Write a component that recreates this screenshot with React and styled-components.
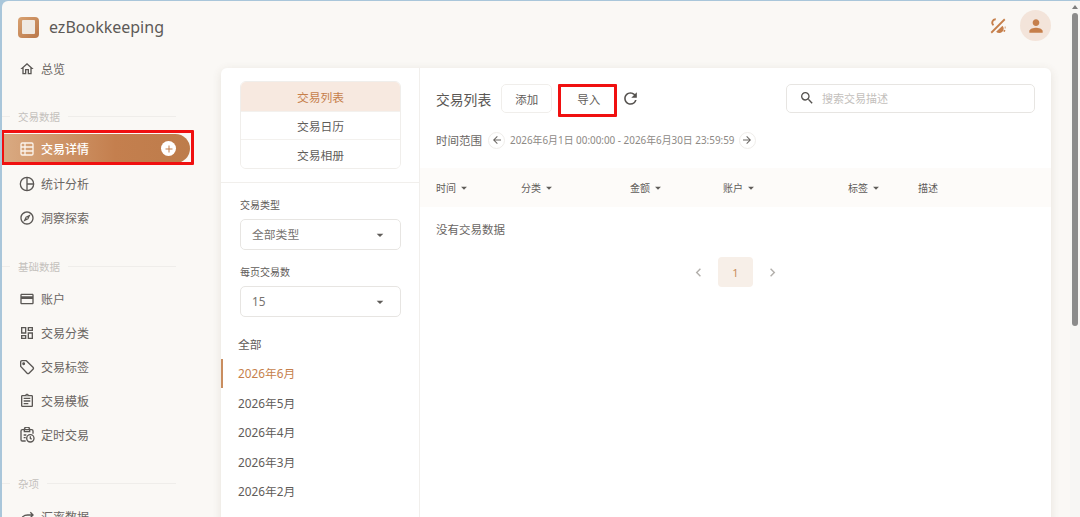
import React from 'react';
import styled, { createGlobalStyle } from 'styled-components';
import {
  MdOutlineHome, MdOutlineExplore, MdOutlineCreditCard, MdOutlineDashboard,
  MdOutlineAssignment, MdRefresh, MdSearch, MdPerson, MdAdd, MdArrowBack, MdArrowForward,
  MdArrowDropDown, MdChevronLeft, MdChevronRight,
} from 'react-icons/md';

const GlobalStyle = createGlobalStyle`
  html, body { margin: 0; padding: 0; height: 100%; overflow: hidden; background: #a9c6da; }
  * { box-sizing: border-box; }
  body { font-family: "Noto Sans", "Noto Sans CJK SC", sans-serif; }
`;

const Frame = styled.div`
  display: flex;
  height: 517px;
  width: 1080px;
  overflow: hidden;
  padding: 1px 0 0 2px;
`;
const Page = styled.div`
  flex: 1;
  display: flex;
  background: #faf8f5;
  border-top-left-radius: 6px;
  overflow: hidden;
  position: relative;
`;
const Sidebar = styled.aside`
  width: 219px;
  flex: none;
  display: flex;
  flex-direction: column;
`;
const Brand = styled.div`
  display: flex;
  flex: none;
  align-items: center;
  gap: 10px;
  height: 26px;
  margin: 13px 0 0 16px;
  font-size: 16px;
  color: #5d5a57;
`;
const Logo = styled.div`
  width: 21px;
  height: 21px;
  border-radius: 4px;
  background: linear-gradient(135deg, #d9a271, #b9774a);
  display: flex;
  align-items: center;
  justify-content: center;
`;
const LogoPage = styled.div`
  width: 13px;
  height: 14px;
  border-radius: 1px;
  background: #efe9e2;
`;
const NavItem = styled.div`
  display: flex;
  flex: none;
  align-items: center;
  height: 34px;
  padding-left: 17px;
  gap: 6px;
  font-size: 12px;
  color: #6a6663;
  svg { flex: none; width: 16px; height: 16px; color: #5a5754; }
`;
const ActiveItem = styled(NavItem)`
  width: 187px;
  height: 29px;
  margin: 0 0 4px 1px;
  padding: 0 14px 0 16px;
  border-radius: 0 15px 15px 0;
  background: linear-gradient(90deg, #d9aa82, #c47f4e 60%, #bd7c4b);
  color: #fff;
  font-weight: 500;
  svg { color: #fbf3ec; }
`;
const PlusBadge = styled.span`
  margin-left: auto;
  width: 15px;
  height: 15px;
  border-radius: 50%;
  background: #fff;
  display: flex;
  align-items: center;
  justify-content: center;
  svg { width: 12px; height: 12px; color: #c17c4b; }
`;
const SectionLabel = styled.div`
  display: flex;
  flex: none;
  align-items: center;
  height: 16px;
  width: 174px;
  font-size: 10.5px;
  color: #c4c1bd;
  gap: 8px;
  margin-top: ${p => p.$top}px;
  margin-bottom: ${p => p.$bottom}px;
  &::before { content: ""; width: 8px; height: 1px; background: #efedea; }
  &::after { content: ""; flex: 1; height: 1px; background: #efedea; }
`;
const HomeItem = styled(NavItem)`
  margin-top: 12px;
`;
const Main = styled.main`
  width: 830px;
  flex: none;
  padding-top: 67px;
`;
const Card = styled.section`
  display: flex;
  height: 520px;
  background: #fff;
  border-radius: 6px;
  box-shadow: 0 2px 10px rgba(90, 70, 50, 0.12);
`;
const Filters = styled.div`
  width: 199px;
  flex: none;
  border-right: 1px solid #f1efec;
  display: flex;
  flex-direction: column;
`;
const Tabs = styled.div`
  flex: none;
  margin: 13px 18px 0 19px;
  border: 1px solid #f0eeeb;
  border-radius: 6px;
  overflow: hidden;
`;
const Tab = styled.div`
  height: 28.7px;
  display: flex;
  align-items: center;
  justify-content: center;
  font-size: 11.8px;
  color: ${p => (p.$active ? '#c67f4b' : '#5f5c59')};
  background: ${p => (p.$active ? '#f7e9e0' : '#fff')};
  border-top: ${p => (p.$active ? 'none' : '1px solid #f3f1ee')};
`;
const FilterBlock = styled.div`
  flex: none;
  border-top: 1px solid #f1efec;
  margin-top: 13px;
  padding: 15px 18px 0 19px;
`;
const FieldLabel = styled.div`
  font-size: 10px;
  height: 15px;
  line-height: 15px;
  color: #5f5c59;
  margin-bottom: 6px;
`;
const Select = styled.div`
  height: 31px;
  border: 1px solid #e7e5e2;
  border-radius: 5px;
  display: flex;
  align-items: center;
  justify-content: space-between;
  padding: 0 12px 2px 11px;
  font-size: 11.8px;
  color: #77736f;
  margin-bottom: 15px;
  &:last-child { margin-bottom: 0; }
  svg { color: #5f5c59; margin-top: 2px; }
`;
const MonthList = styled.div`
  flex: none;
  margin-top: 12px;
`;
const Month = styled.div`
  height: 29.5px;
  display: flex;
  align-items: center;
  padding: 0 0 1px ${p => (p.$active ? '15px' : '17px')};
  font-size: 11.8px;
  color: ${p => (p.$active ? '#c67f4b' : '#5f5c59')};
  border-left: ${p => (p.$active ? '2px solid #c98d5f' : 'none')};
`;
const Content = styled.div`
  flex: 1;
  display: flex;
  flex-direction: column;
  min-width: 0;
`;
const TopRow = styled.div`
  display: flex;
  flex: none;
  align-items: center;
  height: 29px;
  margin: 16px 16px 0 16px;
`;
const Title = styled.div`
  font-size: 13.8px;
  color: #5a5754;
  margin-right: 10px;
`;
const Button = styled.div`
  width: ${p => p.$w}px;
  height: 29px;
  border: 1px solid ${p => (p.$plain ? 'transparent' : '#f0eeeb')};
  border-radius: 5px;
  display: flex;
  align-items: center;
  justify-content: center;
  font-size: 11.5px;
  color: #5f5c59;
  margin-right: ${p => p.$gap}px;
`;
const RefreshIcon = styled(MdRefresh)`
  color: #55524f;
`;
const Search = styled.div`
  margin-left: auto;
  width: 249px;
  height: 29px;
  border: 1px solid #e7e5e2;
  border-radius: 5px;
  display: flex;
  align-items: center;
  padding: 0 0 1px 12px;
  gap: 7px;
  font-size: 11px;
  color: #c3c0bc;
  svg { color: #55524f; }
`;
const RangeRow = styled.div`
  display: flex;
  flex: none;
  align-items: center;
  height: 20px;
  margin: 17px 0 0 16px;
  font-size: 11.5px;
  color: #6a6663;
`;
const RangeText = styled.span`
  font-size: 9.9px;
  color: #8d8985;
  margin: 0 4px 0 5px;
  white-space: nowrap;
`;
const RoundArrow = styled.span`
  width: 17px;
  height: 17px;
  border-radius: 50%;
  border: 1px solid #efedea;
  display: flex;
  align-items: center;
  justify-content: center;
  color: #6a6663;
  margin-left: ${p => p.$left || 0}px;
`;
const TableHead = styled.div`
  display: grid;
  flex: none;
  grid-template-columns: 85px 109px 93px 125px 70px 1fr;
  align-items: center;
  height: 39px;
  margin-top: 18px;
  padding-left: 16px;
  background: #fdfbf9;
  font-size: 10px;
  color: #5f5c59;
`;
const HeadCell = styled.div`
  display: flex;
  align-items: center;
  gap: 1px;
`;
const EmptyRow = styled.div`
  flex: none;
  height: 44px;
  display: flex;
  align-items: center;
  padding-left: 16px;
  font-size: 11.5px;
  color: #6a6663;
`;
const Pager = styled.div`
  display: flex;
  flex: none;
  align-items: center;
  justify-content: center;
  margin-top: 6px;
  gap: 11px;
  color: #b3b0ac;
`;
const PageNumber = styled.div`
  width: 35px;
  height: 30px;
  border-radius: 4px;
  background: #f7efe8;
  color: #c98b5d;
  font-size: 11px;
  display: flex;
  align-items: center;
  justify-content: center;
`;
const Gutter = styled.div`
  flex: 1;
`;
const HeaderTools = styled.div`
  position: absolute;
  top: 9px;
  right: 29px;
  display: flex;
  align-items: center;
  gap: 13px;
`;
const Avatar = styled.div`
  width: 31px;
  height: 31px;
  border-radius: 50%;
  background: #f3e4da;
  color: #c67f4b;
  display: flex;
  align-items: center;
  justify-content: center;
`;
const Scrollbar = styled.div`
  width: 10px;
  flex: none;
  background: #f7f6f4;
  display: flex;
  flex-direction: column;
  align-items: center;
  padding-top: 4px;
`;
const ScrollArrow = styled.div`
  width: 0;
  height: 0;
  border-left: 3px solid transparent;
  border-right: 3px solid transparent;
  border-bottom: 4px solid #7d7d7d;
`;
const ScrollThumb = styled.div`
  width: 6px;
  height: 313px;
  margin-top: 4px;
  border-radius: 3px;
  background: #8b8b8b;
`;
const Highlight = styled.div`
  position: absolute;
  left: ${p => p.$x}px;
  top: ${p => p.$y}px;
  width: ${p => p.$w}px;
  height: ${p => p.$h}px;
  border: 3px solid #f01010;
  border-radius: 1px;
  pointer-events: none;
`;

const TableIcon = () => (
  <svg viewBox="0 0 24 24" fill="none" stroke="currentColor" strokeWidth="2">
    <rect x="3" y="3" width="18" height="18" rx="2" />
    <path d="M3 9h18M3 15h18M9 3v18" />
  </svg>
);
const PieIcon = () => (
  <svg viewBox="0 0 24 24" fill="none" stroke="currentColor" strokeWidth="2">
    <circle cx="12" cy="12" r="10" />
    <path d="M12 2v20M12 12h10" />
  </svg>
);
const TagIcon = () => (
  <svg viewBox="0 0 24 24" fill="none" stroke="currentColor" strokeWidth="2" strokeLinejoin="round">
    <path d="M2.500 4.500a2 2 0 0 1 2-2H11l10 10a2 2 0 0 1 0 2.800l-6 6a2 2 0 0 1-2.800 0L2.500 11z" />
    <circle cx="7" cy="7" r="1.200" fill="currentColor" />
  </svg>
);
const ClipClockIcon = () => (
  <svg viewBox="0 0 24 24" fill="none" stroke="currentColor" strokeWidth="2">
    <path d="M10 21H5a2 2 0 0 1-2-2V6a2 2 0 0 1 2-2h3a4 4 0 0 1 8 0h3a2 2 0 0 1 2 2v4" />
    <path d="M8 4h8v3H8zM7 12h4M7 16h3" />
    <circle cx="17" cy="17" r="5.500" />
    <path d="M17 14v3l2 1.500" />
  </svg>
);
const SwapIcon = () => (
  <svg viewBox="0 0 24 24" fill="none" stroke="currentColor" strokeWidth="2">
    <path d="M3 19c0-6 4-10 10-10h8M17 5l4 4-4 4" />
  </svg>
);
const ThemeIcon = () => (
  <svg width="18" height="18" viewBox="0 0 24 24" fill="none" stroke="#c67f4b" strokeWidth="2.400">
    <path d="M21 3 3 21" />
    <path d="M9 3a4.500 4.500 0 0 0-3 8" />
    <path d="M9.500 19.500a5.800 5.800 0 0 0 8.500-8z" fill="#c67f4b" stroke="none" />
    <path d="M11 8.500v.1M19.500 18l2 1M14 21.500v.1M21 14h1" />
  </svg>
);
const Caret = () => <MdArrowDropDown size={14} />;

const months = ['2026年5月', '2026年4月', '2026年3月', '2026年2月'];
const columns = [
  { name: '时间', sort: true }, { name: '分类', sort: true }, { name: '金额', sort: true },
  { name: '账户', sort: true }, { name: '标签', sort: true }, { name: '描述' },
];

export default function App() {
  return (
    <Frame>
      <GlobalStyle />
      <Page>
        <Sidebar>
          <Brand><Logo><LogoPage /></Logo>ezBookkeeping</Brand>
          <HomeItem><MdOutlineHome />总览</HomeItem>
          <SectionLabel $top={22} $bottom={10}>交易数据</SectionLabel>
          <ActiveItem>
            <TableIcon />交易详情
            <PlusBadge><MdAdd /></PlusBadge>
          </ActiveItem>
          <NavItem><PieIcon />统计分析</NavItem>
          <NavItem><MdOutlineExplore />洞察探索</NavItem>
          <SectionLabel $top={23} $bottom={8}>基础数据</SectionLabel>
          <NavItem><MdOutlineCreditCard />账户</NavItem>
          <NavItem><MdOutlineDashboard />交易分类</NavItem>
          <NavItem><TagIcon />交易标签</NavItem>
          <NavItem><MdOutlineAssignment />交易模板</NavItem>
          <NavItem><ClipClockIcon />定时交易</NavItem>
          <SectionLabel $top={23} $bottom={9}>杂项</SectionLabel>
          <NavItem><SwapIcon />汇率数据</NavItem>
        </Sidebar>
        <Main>
          <Card>
            <Filters>
              <Tabs>
                <Tab $active>交易列表</Tab>
                <Tab>交易日历</Tab>
                <Tab>交易相册</Tab>
              </Tabs>
              <FilterBlock>
                <FieldLabel>交易类型</FieldLabel>
                <Select>全部类型<MdArrowDropDown size={16} /></Select>
                <FieldLabel>每页交易数</FieldLabel>
                <Select>15<MdArrowDropDown size={16} /></Select>
              </FilterBlock>
              <MonthList>
                <Month>全部</Month>
                <Month $active>2026年6月</Month>
                {months.map(m => <Month key={m}>{m}</Month>)}
              </MonthList>
            </Filters>
            <Content>
              <TopRow>
                <Title>交易列表</Title>
                <Button $w={51} $gap={8}>添加</Button>
                <Button $w={57} $gap={4} $plain>导入</Button>
                <RefreshIcon size={19} />
                <Search><MdSearch size={16} />搜索交易描述</Search>
              </TopRow>
              <RangeRow>
                时间范围
                <RoundArrow $left={6}><MdArrowBack size={12} /></RoundArrow>
                <RangeText>2026年6月1日 00:00:00 - 2026年6月30日 23:59:59</RangeText>
                <RoundArrow><MdArrowForward size={12} /></RoundArrow>
              </RangeRow>
              <TableHead>
                {columns.map(c => (
                  <HeadCell key={c.name}>{c.name}{c.sort && <Caret />}</HeadCell>
                ))}
              </TableHead>
              <EmptyRow>没有交易数据</EmptyRow>
              <Pager>
                <MdChevronLeft size={17} />
                <PageNumber>1</PageNumber>
                <MdChevronRight size={17} />
              </Pager>
            </Content>
          </Card>
        </Main>
        <Gutter />
        <HeaderTools>
          <ThemeIcon />
          <Avatar><MdPerson size={20} /></Avatar>
        </HeaderTools>
        <Scrollbar>
          <ScrollArrow />
          <ScrollThumb />
        </Scrollbar>
        <Highlight $x={-1} $y={129} $w={193} $h={35} />
        <Highlight $x={556} $y={83} $w={59} $h={33} />
      </Page>
    </Frame>
  );
}
